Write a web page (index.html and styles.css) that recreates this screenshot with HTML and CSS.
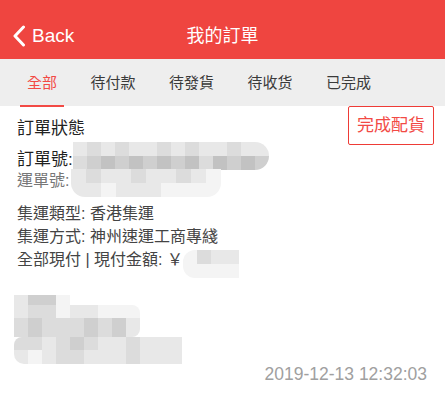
FILE: index.html
```html
<!DOCTYPE html>
<html lang="zh-Hant">
<head>
  <meta charset="UTF-8">
  <title>我的訂單</title>
  <link rel="stylesheet" href="styles.css">
</head>
<body>
<div class="page">
  <!--頂部導航-->
  <div class="header">
    <a href="#" class="back">
      <svg width="14" height="22" viewBox="0 0 14 22"><path d="M11.5 2 L3 11 L11.5 20" fill="none" stroke="#fff" stroke-width="3" stroke-linecap="round" stroke-linejoin="round"/></svg>
      <span>Back</span>
    </a>
    <h1 class="title">我的訂單</h1>
  </div>

  <!--訂單分類-->
  <ul class="tabs">
    <li class="current">全部</li>
    <li>待付款</li>
    <li>待發貨</li>
    <li>待收货</li>
    <li>已完成</li>
  </ul>

  <!--訂單內容-->
  <div class="order">
    <div class="status">
      <span class="status-label">訂單狀態</span>
      <a href="#" class="btn">完成配貨</a>
    </div>
    <div class="line line-main">訂單號:
      <span class="mosaic mosaic-order">
        <span class="row"><i class="c1"></i><i class="c2"></i><i class="c1"></i><i class="c2"></i><i class="c1"></i><i class="c1"></i><i class="c2"></i><i class="c1"></i><i class="c2"></i><i class="c1"></i><i class="c1"></i><i class="c2"></i><i class="c1"></i><i class="c1"></i></span>
        <span class="row"><i class="c2"></i><i class="c3"></i><i class="c4"></i><i class="c3"></i><i class="c4"></i><i class="c3"></i><i class="c4"></i><i class="c3"></i><i class="c4"></i><i class="c2"></i><i class="c4"></i><i class="c3"></i><i class="c4"></i><i class="c3"></i></span>
      </span>
    </div>
    <div class="line line-sub">運單號:
      <span class="mosaic mosaic-way">
        <span class="row"><i class="c1"></i><i class="c2"></i><i class="c1"></i><i class="c1"></i><i class="c2"></i><i class="c1"></i><i class="c1"></i><i class="c2"></i><i class="c1"></i><i class="c0"></i></span>
        <span class="row"><i class="c1"></i><i class="c1"></i><i class="c0"></i><i class="c1"></i><i class="c1"></i><i class="c1"></i><i class="c0"></i><i class="c0"></i><i class="c0"></i><i class="c0"></i></span>
      </span>
    </div>

    <div class="info">
      <p>集運類型: 香港集運</p>
      <p>集運方式: 神州速運工商專綫</p>
      <p>全部現付 | 現付金額: ￥<span class="mosaic mosaic-price"><span class="row"><i class="c0"></i><i class="c2"></i><i class="c1"></i><i class="c1"></i></span><span class="row"><i class="c0"></i><i class="c0"></i><i class="c0"></i><i class="c0"></i></span></span></p>
    </div>

    <!--收件人信息(已打碼)-->
    <div class="address">
      <div class="block b1"><i class="c1"></i><i class="c3"></i><i class="c3"></i><i class="c0"></i></div>
      <div class="block b2"><i class="c1"></i><i class="c2"></i><i class="c2"></i><i class="c0"></i><i class="c1"></i><i class="c1"></i><i class="c0"></i><i class="c0"></i><i class="c0"></i></div>
      <div class="block b3"><i class="c2"></i><i class="c3"></i><i class="c2"></i><i class="c2"></i><i class="c2"></i><i class="c3"></i><i class="c2"></i><i class="c3"></i><i class="c1"></i></div>
      <div class="block b4"><i class="c2"></i><i class="c2"></i><i class="c1"></i><i class="c2"></i><i class="c3"></i><i class="c2"></i><i class="c1"></i><i class="c1"></i><i class="c2"></i><i class="c1"></i><i class="c1"></i><i class="c1"></i></div>
      <div class="block b5"><i class="c1"></i><i class="c0"></i><i class="c1"></i><i class="c2"></i><i class="c2"></i><i class="c1"></i><i class="c1"></i><i class="c1"></i><i class="c2"></i><i class="c1"></i><i class="c1"></i><i class="c1"></i></div>
    </div>

    <div class="time">2019-12-13 12:32:03</div>
  </div>
</div>
</body>
</html>
```

FILE: styles.css
```css
* {
  margin: 0;
  padding: 0;
}

ul {
  list-style: none;
}

a {
  text-decoration: none;
}

body {
  background-color: #fff;
  font-family: "Liberation Sans", "Noto Sans CJK TC", sans-serif;
  color: #222;
}

.page {
  width: 445px;
  height: 413px;
  overflow: hidden;
}

/* 頂部導航 */
.header {
  height: 59px;
  background-color: #ef4540;
  position: relative;
  display: flex;
  align-items: center;
  justify-content: center;
}

.back {
  position: absolute;
  left: 12px;
  top: 25px;
  display: flex;
  align-items: center;
  color: #fff;
  font-size: 19px;
  line-height: 22px;
}

.back svg {
  display: block;
  margin-right: 6px;
}

.title {
  margin-top: 12px;
  font-size: 18px;
  font-weight: normal;
  color: #fff;
  line-height: 24px;
}

/* 分類標籤 */
.tabs {
  height: 47px;
  padding-left: 27px;
  background-color: #eee;
  display: flex;
  gap: 33.5px;
}

.tabs li {
  position: relative;
  font-size: 15px;
  line-height: 47px;
  color: #3a3a3a;
}

.tabs li.current {
  color: #f24a45;
}

.tabs li.current::after {
  content: "";
  position: absolute;
  left: -7px;
  right: -7px;
  bottom: -1px;
  height: 2px;
  background-color: #f24a45;
}

/* 訂單內容 */
.order {
  padding: 0 18px 0 17px;
}

.status {
  height: 40px;
  margin-right: -7px;
  display: flex;
  align-items: center;
  justify-content: space-between;
}

.status-label {
  font-size: 17px;
  color: #222;
}

.btn {
  width: 84px;
  height: 37px;
  margin-top: -1px;
  border: 1.5px solid #ee3b36;
  border-radius: 2px;
  color: #f24a45;
  font-size: 17px;
  line-height: 37px;
  text-align: center;
}

.line {
  display: flex;
  align-items: center;
  height: 22px;
}

.line-main {
  font-size: 17px;
  color: #1f1f1f;
}

.line-sub {
  font-size: 16px;
  color: #777;
}

.info {
  margin-top: 12px;
  font-size: 16px;
  color: #444;
}

.info p {
  height: 23px;
  line-height: 23px;
  display: flex;
  align-items: center;
}

/* 打碼區 */
.mosaic {
  display: inline-flex;
  flex-direction: column;
  overflow: hidden;
  filter: blur(0.6px);
}

.mosaic .row {
  display: flex;
}

.mosaic i {
  display: block;
  width: 14px;
  height: 14px;
}

.mosaic-order {
  margin: -5px 0 -3px 0;
  border-radius: 0 14px 14px 0;
}

.mosaic-way {
  margin: -1px 0 -9px 2px;
  border-radius: 0 0 14px 14px;
}

.mosaic-way i {
  width: 15px;
}

.mosaic-price {
  margin: 2px 0 -6px 0;
  border-radius: 12px 0 0 12px;
}

.c0 {
  background-color: #f4f4f4;
}

.c1 {
  background-color: #e8e8e8;
}

.c2 {
  background-color: #dcdcdc;
}

.c3 {
  background-color: #cfcfcf;
}

.c4 {
  background-color: #c2c2c2;
}

.address {
  margin: 24px 0 0 -3px;
  filter: blur(0.6px);
}

.block {
  display: flex;
  overflow: hidden;
}

.block i {
  display: block;
  width: 14px;
  height: 100%;
}

.b1 {
  width: 56px;
  height: 10px;
}

.b2 {
  width: 126px;
  height: 13px;
  border-radius: 0 8px 0 0;
}

.b3 {
  width: 126px;
  height: 19px;
  border-radius: 0 0 8px 0;
}

.b4 {
  width: 168px;
  height: 13px;
  border-radius: 8px 0 0 0;
}

.b5 {
  width: 168px;
  height: 14px;
  border-radius: 0 0 0 10px;
}

.time {
  margin-top: 0;
  text-align: right;
  font-size: 17.5px;
  line-height: 20px;
  color: #a0a0a0;
}
```
